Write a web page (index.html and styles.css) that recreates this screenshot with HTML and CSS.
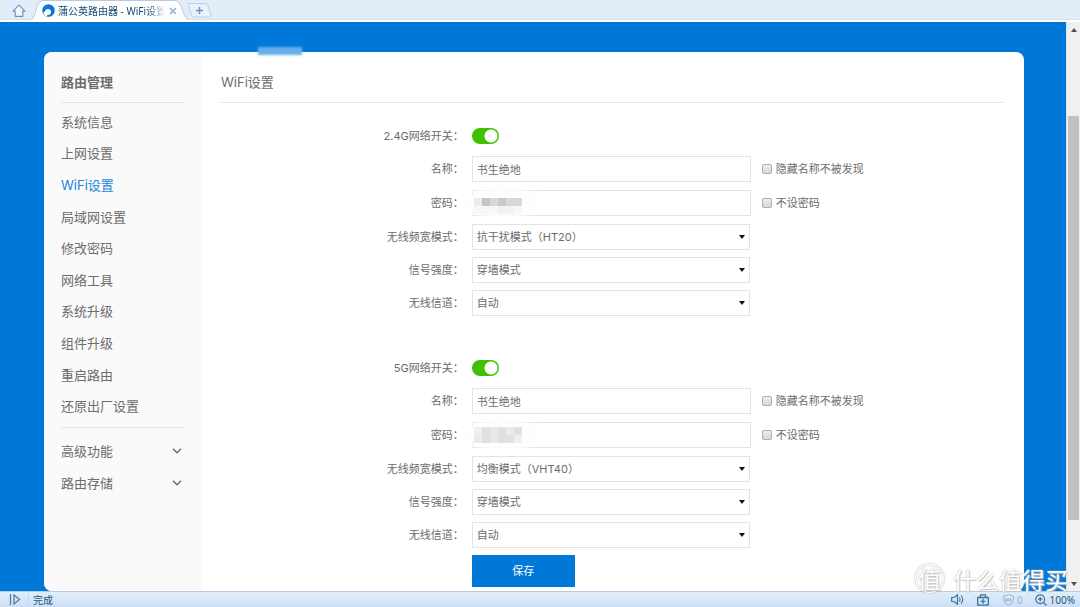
FILE: index.html
```html
<!DOCTYPE html>
<html lang="zh-CN">
<head>
<meta charset="utf-8">
<title>蒲公英路由器 - WiFi设置</title>
<link rel="stylesheet" href="styles.css">
</head>
<body>
<header class="tabbar">
  <button class="home" aria-label="主页">
    <svg width="14" height="14" viewBox="0 0 14 14"><path d="M1 7.200 7 1.200l6 6h-2.200V12.300H3.200V7.200z" fill="#f3f8fe" stroke="#6a93c0" stroke-width="1.200" stroke-linejoin="round"/></svg>
  </button>
  <div class="tab">
    <svg class="tab-shape" viewBox="0 0 158 21" preserveAspectRatio="none"><path d="M0 21C3 19 4 14 6 7Q8 .5 12 .5H144Q148 .5 150 6C153 14 154 19 158 21z" fill="#fff"/><path d="M0 20C3 18 4 14 6 7Q8 .5 12 .5H144Q148 .5 150 6C153 14 154 18 158 20" fill="none" stroke="#b3cbe5"/></svg>
    <svg class="favicon" width="13" height="13" viewBox="0 0 13 13"><circle cx="6.500" cy="6.500" r="6.300" fill="#0878d8"/><circle cx="6" cy="8" r="3" fill="#fff"/><path d="M1.200 8.500L3.500 7l2 4-1.200 1.700Q2 11.500 1.200 8.500z" fill="#fff"/></svg>
    <span class="tab-title">蒲公英路由器 - WiFi设置</span>
    <button class="tab-close" aria-label="关闭标签"><svg width="8" height="8" viewBox="0 0 8 8"><path d="M1 1l6 6M7 1 1 7" stroke="#91b0d4" stroke-width="1.500"/></svg></button>
  </div>
  <button class="new-tab" aria-label="新标签">
    <svg width="25" height="15" viewBox="0 0 25 15"><path d="M1 1.500Q1 .5 2.500 .5H18Q20 .5 21 3l3 9q.5 2-1.500 2H6.500Q5 14 4.300 12z" fill="#e9f1fa" stroke="#bacfe6"/><path d="M12.500 4v7M9 7.500h7" stroke="#6e93bd" stroke-width="1.500"/></svg>
  </button>
</header>

<div class="viewport">
  <main class="page">
    <span class="smudge"></span>
    <div class="card">
      <nav class="sidebar">
        <h2 class="side-title">路由管理</h2>
        <ul class="menu">
          <li><a href="#">系统信息</a></li>
          <li><a href="#">上网设置</a></li>
          <li><a href="#" class="active">WiFi设置</a></li>
          <li><a href="#">局域网设置</a></li>
          <li><a href="#">修改密码</a></li>
          <li><a href="#">网络工具</a></li>
          <li><a href="#">系统升级</a></li>
          <li><a href="#">组件升级</a></li>
          <li><a href="#">重启路由</a></li>
          <li><a href="#">还原出厂设置</a></li>
        </ul>
        <div class="groups">
          <button class="group">高级功能<svg width="10" height="6" viewBox="0 0 10 6"><path d="M1 .8l4 4 4-4" fill="none" stroke="#666" stroke-width="1.300"/></svg></button>
          <button class="group">路由存储<svg width="10" height="6" viewBox="0 0 10 6"><path d="M1 .8l4 4 4-4" fill="none" stroke="#666" stroke-width="1.300"/></svg></button>
        </div>
      </nav>
      <section class="content">
        <h1 class="title">WiFi设置</h1>
        <form class="form">
          <div class="band">
            <div class="row"><label class="label" for="on24">2.4G网络开关：</label><input class="switch" type="checkbox" id="on24" checked></div>
            <div class="row tall"><label class="label" for="name24">名称：</label><input class="text" id="name24" value="书生绝地"><label class="check"><input type="checkbox">隐藏名称不被发现</label></div>
            <div class="row tall"><label class="label" for="pw24">密码：</label>
              <div class="field"><input class="text" id="pw24">
                <svg class="mask" width="84" height="38" viewBox="0 0 84 38"><ellipse class="mist" cx="36" cy="19" rx="38" ry="16"/><path fill="#ececec" d="M8 14h8v8H8z"/><path fill="#c5c5c5" d="M16 14h8v8h-8z"/><path fill="#d8d8d6" d="M24 14h8v8h-8z"/><path fill="#cacaca" d="M32 14h8v8h-8z"/><path fill="#d8d8d8" d="M40 14h16v8H40z"/><path fill="#f7f7f7" d="M8 22h24v8H8zM48 22h8v8h-8z"/><path fill="#f2f2f2" d="M32 22h16v8H32z"/></svg>
              </div>
              <label class="check"><input type="checkbox">不设密码</label></div>
            <div class="row"><label class="label" for="mode24">无线频宽模式：</label><select id="mode24"><option>抗干扰模式（HT20）</option></select></div>
            <div class="row"><label class="label" for="sig24">信号强度：</label><select id="sig24"><option>穿墙模式</option></select></div>
            <div class="row"><label class="label" for="ch24">无线信道：</label><select id="ch24"><option>自动</option></select></div>
          </div>
          <div class="band">
            <div class="row"><label class="label" for="on5">5G网络开关：</label><input class="switch" type="checkbox" id="on5" checked></div>
            <div class="row tall"><label class="label" for="name5">名称：</label><input class="text" id="name5" value="书生绝地"><label class="check"><input type="checkbox">隐藏名称不被发现</label></div>
            <div class="row tall"><label class="label" for="pw5">密码：</label>
              <div class="field"><input class="text" id="pw5">
                <svg class="mask" width="84" height="38" viewBox="0 0 84 38"><ellipse class="mist" cx="36" cy="19" rx="38" ry="16"/><path fill="#f0f0f0" d="M8 11h8v8H8z"/><path fill="#e0e0e0" d="M16 11h8v16h-8z"/><path fill="#e8e8e6" d="M24 11h8v16h-8z"/><path fill="#e0e0e0" d="M32 11h8v16h-8z"/><path fill="#ebebe9" d="M40 11h8v8h-8zM8 19h8v8H8z"/><path fill="#e0e0e0" d="M48 11h8v8h-8zM40 19h8v8h-8z"/><path fill="#eff0f4" d="M48 19h8v8h-8z"/></svg>
              </div>
              <label class="check"><input type="checkbox">不设密码</label></div>
            <div class="row"><label class="label" for="mode5">无线频宽模式：</label><select id="mode5"><option>均衡模式（VHT40）</option></select></div>
            <div class="row"><label class="label" for="sig5">信号强度：</label><select id="sig5"><option>穿墙模式</option></select></div>
            <div class="row"><label class="label" for="ch5">无线信道：</label><select id="ch5"><option>自动</option></select></div>
            <div class="row"><button class="save" type="button">保存</button></div>
          </div>
        </form>
      </section>
    </div>
  </main>
  <div class="scrollbar">
    <svg class="arrow" width="6" height="4" viewBox="0 0 6 4"><path d="M0 4l3-4 3 4z" fill="#505050"/></svg>
    <div class="track"><div class="thumb"></div></div>
    <svg class="arrow" width="6" height="4" viewBox="0 0 6 4"><path d="M0 0l3 4 3-4z" fill="#505050"/></svg>
  </div>
</div>

<footer class="status">
  <svg width="12" height="11" viewBox="0 0 12 11"><path d="M1.500 0v11M5 1v9l5.500-4.500z" fill="none" stroke="#5580a8" stroke-width="1.300"/></svg>
  <span class="done">完成</span>
  <div class="tools">
    <svg width="13" height="11" viewBox="0 0 13 11"><path d="M.7 3.500H3L6.500 .8v9.400L3 7.500H.7z" fill="none" stroke="#41719c" stroke-width="1.200"/><path d="M8.300 3.500q1.500 2 0 4M10 1.500q3.500 4 0 8" fill="none" stroke="#41719c" stroke-width="1.100"/></svg>
    <svg class="kit" width="12" height="12" viewBox="0 0 12 12"><path d="M.7 3.500h10.600v7.700H.7zM3.500 3V.8h5V3M6 4.800v5M3.500 7.300h5" fill="none" stroke="#41719c" stroke-width="1.300"/></svg>
    <svg class="shield" width="11" height="12" viewBox="0 0 11 12"><path d="M5.500 .7 10.300 2v4q0 3.500-4.800 5.300Q.7 9.500 .7 6V2z" fill="none" stroke="#91b4d6"/><path d="M3 4v4M5 4v4M7.500 4v4M3 6h4.500" stroke="#91b4d6"/></svg>
    <span class="count">0</span>
    <svg class="zoom" width="12" height="12" viewBox="0 0 12 12"><circle cx="5.200" cy="5.200" r="4.400" fill="none" stroke="#41719c" stroke-width="1.200"/><path d="M8.500 8.500l3 3M5.200 3v4.400M3 5.200h4.400" stroke="#41719c" stroke-width="1.300"/></svg>
    <span>100%</span>
  </div>
</footer>
<div class="watermark"><span class="seal">值</span><span>什么值得买</span></div>
</body>
</html>
```
FILE: styles.css
```css
* { box-sizing: border-box; }
body {
  margin: 0;
  height: 100vh;
  display: flex;
  flex-direction: column;
  overflow: hidden;
  position: relative;
  font: 11px/16px Inter, "Noto Sans CJK SC", sans-serif;
  color: #6c6c6c;
}
button, input, select { font: inherit; color: inherit; margin: 0; }
button { padding: 0; border: 0; background: none; }
svg { display: block; flex: none; }

.tabbar {
  height: 22px;
  flex: none;
  display: flex;
  align-items: flex-start;
  padding-left: 12px;
  background: linear-gradient(#e3edf8 0 19px, #d3e0ed 19px 20px, #fff 20px);
  font-family: "Noto Sans", "Noto Sans CJK SC", sans-serif;
  font-size: 10px;
  color: #174a75;
}
.home { padding-top: 4px; }
.tab {
  position: relative;
  width: 158px;
  height: 21px;
  margin-left: 5px;
  padding: 0 12px 0 11px;
  display: flex;
  align-items: center;
}
.tab-shape { position: absolute; inset: 0; width: 100%; height: 100%; }
.favicon, .tab-title, .tab-close { position: relative; }
.tab-title {
  flex: 1;
  margin-left: 3px;
  overflow: hidden;
  white-space: nowrap;
  mask-image: linear-gradient(90deg, #000 85%, transparent);
}
.tab-close { margin-left: 4px; }
.new-tab { padding-top: 3px; margin-left: -2px; }

.viewport { flex: 1; min-height: 0; display: flex; }
.page {
  position: relative;
  flex: 1;
  display: flex;
  padding: 30px 42px 0 44px;
  background: #0078d8;
}
.smudge {
  position: absolute;
  left: 258px;
  top: 25px;
  width: 44px;
  height: 8px;
  background: #67aeea;
  filter: blur(1px);
  z-index: 1;
}
.card {
  flex: 1;
  display: flex;
  background: #fff;
  border-radius: 8px;
  overflow: hidden;
}
.sidebar { width: 157px; flex: none; padding: 0 17px; background: #fafafa; font-size: 13px; }
.side-title, .title {
  margin: 0;
  padding: 22px 0 11px;
  border-bottom: 1px solid #e4e4e4;
  font-size: 13px;
  line-height: 17px;
}
.title { font-weight: 400; }
.menu {
  list-style: none;
  margin: 0;
  padding: 3px 0 5px;
  height: 325px;
  display: grid;
  grid-auto-rows: 1fr;
  align-items: center;
  border-bottom: 1px solid #e4e4e4;
}
.menu a { color: inherit; text-decoration: none; }
.menu .active { color: #2383dc; }
.groups { padding-top: 7px; }
.group {
  display: flex;
  align-items: center;
  justify-content: space-between;
  width: 100%;
  height: 32px;
  padding-right: 2px;
}

.content { flex: 1; padding: 0 20px; min-width: 0; }
.form { padding-top: 20px; }
.band { margin-bottom: 39px; }
.row {
  display: grid;
  grid-template-columns: 31% 279px auto;
  align-items: center;
  column-gap: 8px;
  height: 26px;
  margin-bottom: 7px;
}
.row.tall { margin-bottom: 8px; }
.label { text-align: right; }
.text, select {
  width: 100%;
  height: 26px;
  padding: 0 4px;
  border: 1px solid #e3e3e3;
  border-radius: 0;
  background: #fff;
  outline: 0;
}
select {
  width: 278px;
  appearance: none;
  background: #fff url("data:image/svg+xml,%3Csvg xmlns='http://www.w3.org/2000/svg' width='6' height='4'%3E%3Cpath d='M0 0h6L3 4z' fill='%23111'/%3E%3C/svg%3E") no-repeat right 4px center;
}
.field { position: relative; }
.mask { position: absolute; left: -6px; top: -6px; pointer-events: none; }
.mist { fill: #fefefe; filter: blur(3px); }
.switch {
  appearance: none;
  width: 27px;
  height: 16px;
  border-radius: 8px;
  background: radial-gradient(circle at 19px 8px, #fff 6px, #3fc000 7px);
}
.check { display: flex; align-items: center; gap: 4px; padding-left: 3px; }
.check input {
  appearance: none;
  width: 10px;
  height: 10px;
  border: 1px solid #adadad;
  border-radius: 2px;
  background: linear-gradient(#eee, #d8d8d8);
}
.save { grid-column: 2; align-self: start; width: 103px; height: 32px; background: #0078d8; color: #fff; }

.scrollbar {
  width: 14px;
  display: flex;
  flex-direction: column;
  align-items: center;
  padding: 6px 1px 5px;
  background: #f0f0f0;
  border-left: 1px solid #d5e6f5;
}
.track { flex: 1; width: 100%; margin: 6px 0; }
.thumb { height: 75%; margin-top: 78px; background: #c1c1c1; }

.status {
  height: 16px;
  flex: none;
  display: flex;
  align-items: center;
  padding: 0 5px 0 9px;
  border-top: 1px solid #b7cbe2;
  background: linear-gradient(#e0eefc, #cbdff4);
  font-family: "Noto Sans", "Noto Sans CJK SC", sans-serif;
  font-size: 10px;
  line-height: 12px;
  color: #24567f;
}
.done { margin-left: 7px; padding-left: 4px; border-left: 1px solid #c3d7ec; }
.tools { margin-left: auto; display: flex; align-items: center; }
.kit { margin-left: 13px; }
.shield { margin-left: 14px; }
.count { margin: 0 12px 0 3px; color: #91b4d6; }
.zoom { margin-right: 3px; }

.watermark {
  position: absolute;
  right: 12px;
  bottom: 14px;
  display: flex;
  align-items: center;
  gap: 9px;
  font: 23px/24px "Noto Sans CJK SC", sans-serif;
  color: #fff;
  text-shadow: 0 0 2px #aaa, 1px 1px 1px #ccc;
  pointer-events: none;
}
.seal {
  width: 29px;
  height: 29px;
  border: 1px solid #fff;
  border-radius: 50%;
  box-shadow: 0 0 2px #999, inset 0 0 2px #aaa;
  line-height: 26px;
  text-align: center;
}
```
